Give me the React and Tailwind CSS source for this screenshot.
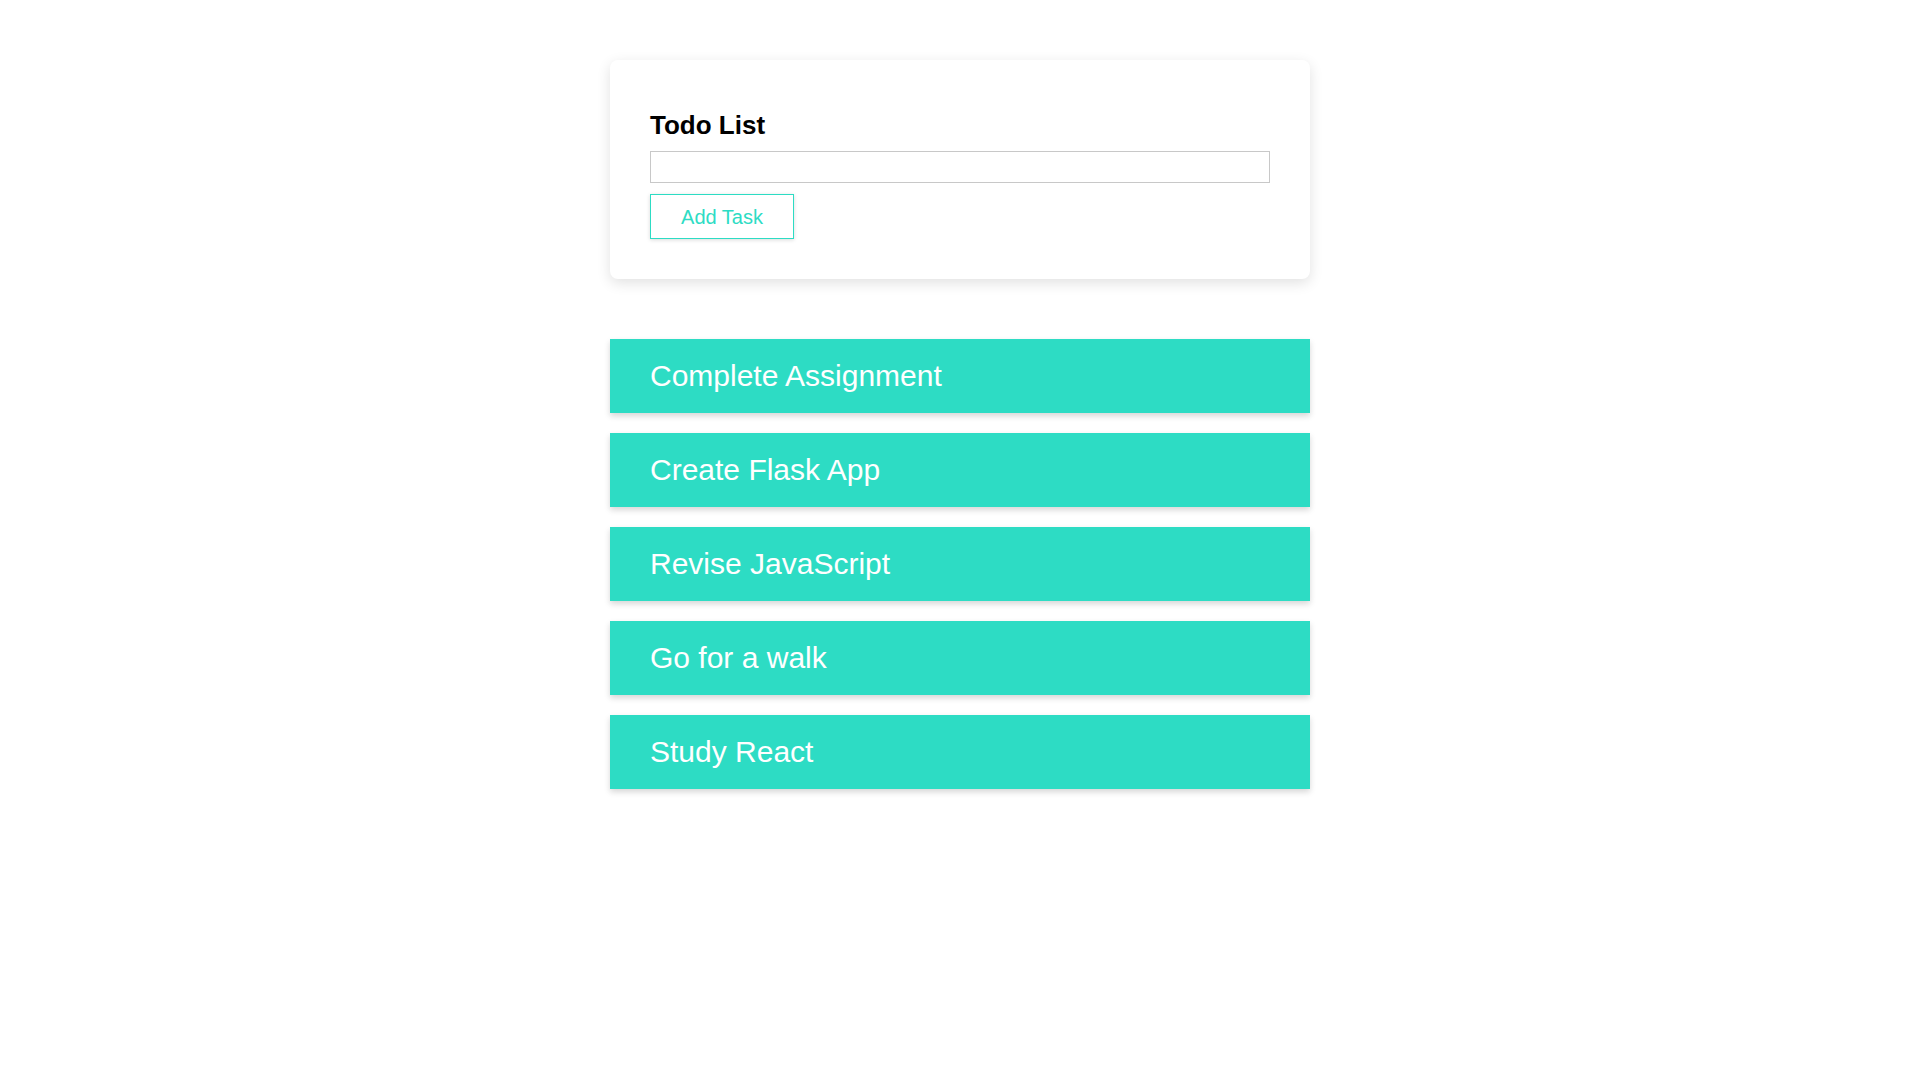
import React, { useState } from 'react';

const initialTasks = [
  'Complete Assignment',
  'Create Flask App',
  'Revise JavaScript',
  'Go for a walk',
  'Study React',
];

const App = () => {
  const [tasks, setTasks] = useState(initialTasks);
  const [text, setText] = useState('');

  const addTask = () => {
    if (!text.trim()) return;
    setTasks([...tasks, text.trim()]);
    setText('');
  };

  return (
    <div className="min-h-screen bg-white font-['Liberation_Sans',Arial,sans-serif]">
      <div className="w-[700px] mx-auto pt-[60px]">
        {/* form card */}
        <div className="bg-white rounded-lg shadow-[0_4px_14px_rgba(0,0,0,0.12)] px-10 pt-[51px] pb-10">
          <h2 className="text-[26px] font-bold text-black leading-[29px]">Todo List</h2>
          <input
            type="text"
            value={text}
            onChange={(e) => setText(e.target.value)}
            className="block w-full h-[32px] mt-[11px] border border-[#c8c8c8] px-2 text-base outline-none"
          />
          <button
            onClick={addTask}
            className="mt-[11px] w-[144px] h-[45px] border border-[#2ddcc4] text-[#2ddcc4] text-[20px] bg-white shadow-[0_1px_4px_rgba(0,0,0,0.15)]"
          >
            Add Task
          </button>
        </div>

        {/* task list */}
        <div className="mt-[60px] flex flex-col gap-5">
          {tasks.map((task, idx) => (
            <div
              key={idx}
              className="h-[74px] bg-[#2ddcc4] flex items-center px-10 pb-[2px] text-white text-[30px] shadow-[0_3px_6px_rgba(0,0,0,0.16)]"
            >
              {task}
            </div>
          ))}
        </div>
      </div>
    </div>
  );
};

export default App;
